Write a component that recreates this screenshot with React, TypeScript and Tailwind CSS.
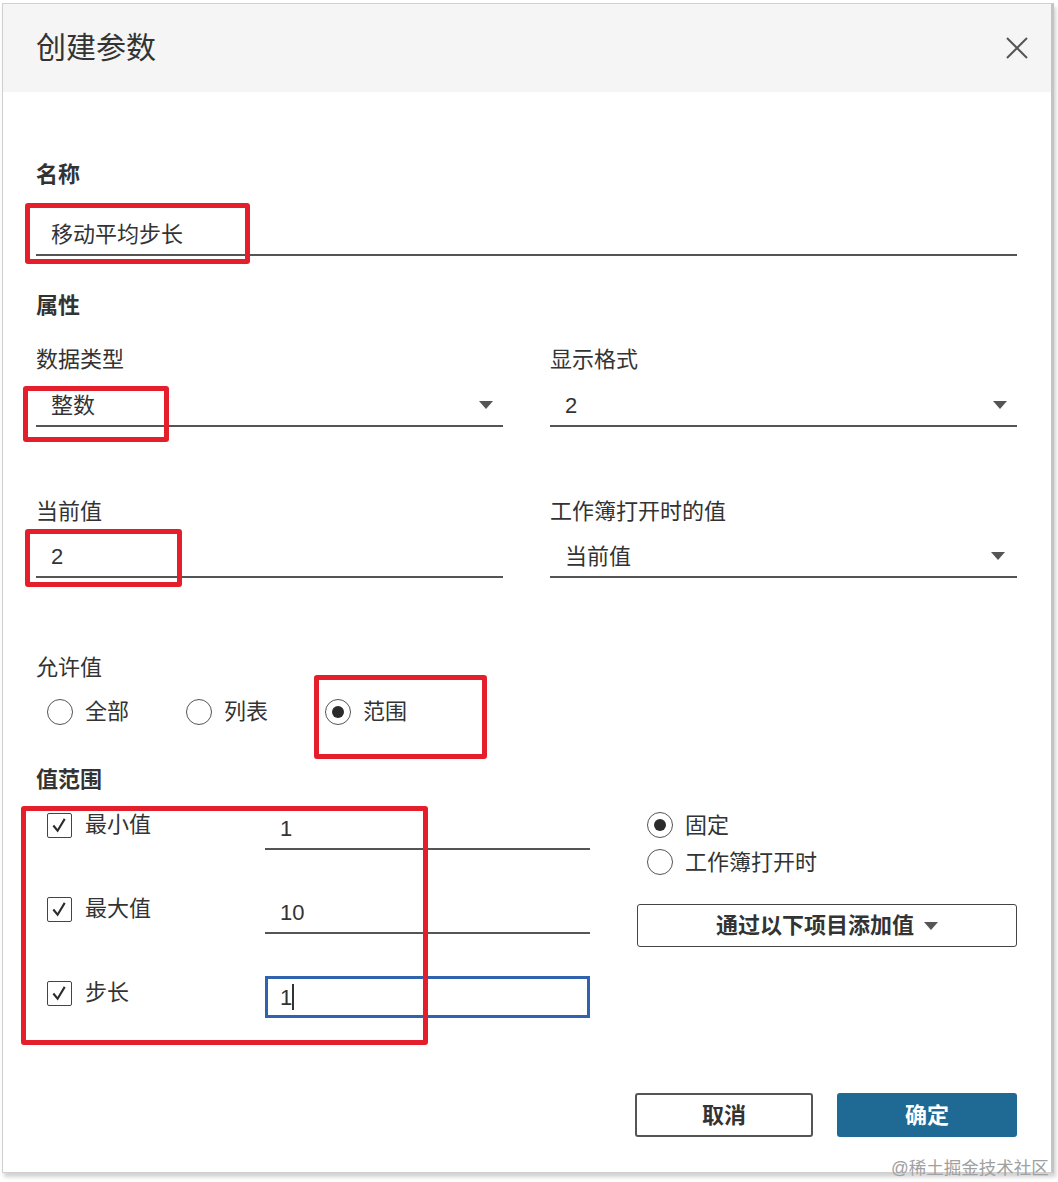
import React from 'react';

const FONT = 'font-["Liberation_Sans","Noto_Sans_CJK_SC",sans-serif]';

const Caret: React.FC<{ className?: string }> = ({ className = '' }) => (
  <svg viewBox="0 0 14 8" className={`w-[14px] h-[8px] ${className}`}>
    <path d="M0 0 L14 0 L7 8 Z" fill="#555" />
  </svg>
);

const Radio: React.FC<{ checked?: boolean }> = ({ checked }) => (
  <span className="w-[26px] h-[26px] rounded-full border-[1.5px] border-[#555] flex items-center justify-center shrink-0 bg-white">
    {checked && <span className="w-[12px] h-[12px] rounded-full bg-[#2b2b2b]" />}
  </span>
);

const Checkbox: React.FC = () => (
  <span className="w-[25px] h-[25px] border-[1.5px] border-[#444] rounded-[2px] flex items-center justify-center shrink-0">
    <svg viewBox="0 0 20 20" className="w-[19px] h-[19px]">
      <path d="M3.5 10 L8 15.5 L15.5 3" fill="none" stroke="#2b2b2b" strokeWidth="2.2" />
    </svg>
  </span>
);

const Label: React.FC<{ children: React.ReactNode; bold?: boolean }> = ({ children, bold }) => (
  <div className={`text-[22px] leading-[30px] text-[#333] ${bold ? 'font-bold' : ''}`}>{children}</div>
);

const SelectField: React.FC<{ value: string }> = ({ value }) => (
  <div className="mt-[10px] h-[42px] border-b-2 border-[#555] flex items-center justify-between pl-[15px] pr-[10px]">
    <span className="text-[22px] text-[#333]">{value}</span>
    <Caret />
  </div>
);

const RangeRow: React.FC<{ label: string; value: string; active?: boolean }> = ({ label, value, active }) => (
  <div className="flex items-start h-[42px]">
    <div className="w-[229px] flex items-center gap-[13px] pl-[11px] pt-[2px] h-[32px]">
      <Checkbox />
      <span className="text-[22px] leading-[30px] text-[#333]">{label}</span>
    </div>
    {active ? (
      <div className="w-[325px] h-[42px] border-[3px] border-[#2f63ad] flex items-center pl-[12px]">
        <span className="text-[22px] text-[#333]">{value}</span>
        <span className="w-[2px] h-[26px] bg-[#333]" />
      </div>
    ) : (
      <div className="w-[325px] h-[42px] border-b-2 border-[#555] flex items-center pl-[15px]">
        <span className="text-[22px] text-[#333]">{value}</span>
      </div>
    )}
  </div>
);

const Mark: React.FC<{ className: string }> = ({ className }) => (
  <div className={`absolute border-[5px] border-[#e41e2b] rounded-[3px] pointer-events-none ${className}`} />
);

export default function App() {
  return (
    <div className={`relative min-h-[1182px] bg-white ${FONT}`}>
      <div className="ml-[2px] mt-[3px] w-[1052px] h-[1170px] border border-[#d0d0d0] border-r-[3px] border-r-[#c4c4c4] shadow-[2px_4px_4px_rgba(0,0,0,0.18)] bg-white flex flex-col">
        {/* header */}
        <div className="h-[88px] bg-[#f5f5f5] flex items-center justify-between pl-[33px] pr-[23px]">
          <h1 className="text-[30px] leading-[40px] text-[#333]">创建参数</h1>
          <svg viewBox="0 0 22 22" className="w-[22px] h-[22px]">
            <path d="M1 1 L21 21 M21 1 L1 21" stroke="#555" strokeWidth="2" />
          </svg>
        </div>

        {/* body */}
        <div className="pl-[33px] pr-[34px] flex flex-col">
          <div className="mt-[68px]">
            <Label bold>名称</Label>
          </div>
          <div className="mt-[24px] h-[42px] border-b-2 border-[#555] flex items-center pl-[15px]">
            <span className="text-[22px] text-[#333]">移动平均步长</span>
          </div>

          <div className="mt-[35px]">
            <Label bold>属性</Label>
          </div>

          <div className="mt-[24px] grid grid-cols-2 gap-x-[47px]">
            <div>
              <Label>数据类型</Label>
              <SelectField value="整数" />
            </div>
            <div>
              <Label>显示格式</Label>
              <SelectField value="2" />
            </div>
          </div>

          <div className="mt-[70px] grid grid-cols-2 gap-x-[47px]">
            <div>
              <Label>当前值</Label>
              <div className="mt-[9px] h-[42px] border-b-2 border-[#555] flex items-center pl-[15px]">
                <span className="text-[22px] text-[#333]">2</span>
              </div>
            </div>
            <div>
              <Label>工作簿打开时的值</Label>
              <div className="mt-[9px] h-[42px] border-b-2 border-[#555] flex items-center justify-between pl-[15px] pr-[12px]">
                <span className="text-[22px] text-[#333]">当前值</span>
                <Caret />
              </div>
            </div>
          </div>

          <div className="mt-[75px]">
            <Label>允许值</Label>
          </div>
          <div className="mt-[14px] h-[30px] flex items-center gap-[57px] pl-[11px]">
            {[
              { t: '全部', c: false },
              { t: '列表', c: false },
              { t: '范围', c: true },
            ].map((r) => (
              <label key={r.t} className="flex items-center gap-[12px]">
                <Radio checked={r.c} />
                <span className="text-[22px] leading-[30px] text-[#333]">{r.t}</span>
              </label>
            ))}
          </div>

          <div className="mt-[38px]">
            <Label bold>值范围</Label>
          </div>

          <div className="mt-[13px] flex gap-[47px]">
            <div className="flex flex-col gap-[42px]">
              <RangeRow label="最小值" value="1" />
              <RangeRow label="最大值" value="10" />
              <RangeRow label="步长" value="1" active />
            </div>
            <div className="w-[381px] flex flex-col">
              <div className="mt-[2px] flex flex-col gap-[7px] pl-[10px]">
                <label className="h-[30px] flex items-center gap-[12px]">
                  <Radio checked />
                  <span className="text-[22px] text-[#333]">固定</span>
                </label>
                <label className="h-[30px] flex items-center gap-[12px]">
                  <Radio />
                  <span className="text-[22px] text-[#333]">工作簿打开时</span>
                </label>
              </div>
              <button className="mt-[27px] h-[43px] border-[1.5px] border-[#444] rounded-[3px] flex items-center justify-center gap-[10px] bg-white">
                <span className="text-[22px] font-bold text-[#333]">通过以下项目添加值</span>
                <Caret />
              </button>
            </div>
          </div>

          <div className="mt-[75px] flex justify-end gap-[24px]">
            <button className="w-[178px] h-[44px] border-2 border-[#555] rounded-[3px] bg-white text-[22px] font-bold text-[#333]">
              取消
            </button>
            <button className="w-[180px] h-[44px] rounded-[3px] bg-[#1f6a94] text-[22px] font-bold text-white">
              确定
            </button>
          </div>
        </div>
      </div>

      {/* annotation boxes */}
      <Mark className="left-[25px] top-[200px] w-[225px] h-[61px]" />
      <Mark className="left-[23px] top-[383px] w-[146px] h-[56px]" />
      <Mark className="left-[25px] top-[526px] w-[157px] h-[58px]" />
      <Mark className="left-[314px] top-[672px] w-[173px] h-[84px]" />
      <Mark className="left-[21px] top-[803px] w-[407px] h-[239px]" />

      <div className="absolute left-[891px] top-[1152px] text-[17.5px] leading-[26px] text-[#a0a0a0] whitespace-nowrap">
        @稀土掘金技术社区
      </div>
    </div>
  );
}
